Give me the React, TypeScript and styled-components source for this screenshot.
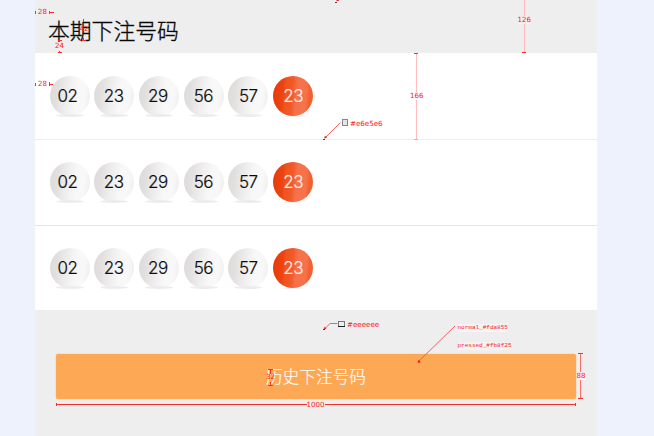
import React from "react";
import styled, { createGlobalStyle } from "styled-components";

const GlobalStyle = createGlobalStyle`
  *, *::before, *::after { box-sizing: border-box; }
  body {
    margin: 0;
    background: #edf2fc;
    font-family: "Liberation Sans", "Noto Sans CJK SC", sans-serif;
  }
`;

const Page = styled.div`
  position: relative;
  width: 654px;
  height: 436px;
  overflow: hidden;
  background: #edf2fc;
  padding: 0 57px 0 35px;
`;

const Screen = styled.main`
  height: 100%;
  display: flex;
  flex-direction: column;
  background: #eeeeee;
`;

const Header = styled.header`
  height: 53px;
  padding: 14px 0 0 13px;
`;

const Title = styled.h1`
  margin: 0;
  font: 300 21.8px/32px "Noto Sans CJK SC", sans-serif;
  color: #080808;
  -webkit-text-stroke: 0.35px #080808;
  white-space: nowrap;
`;

const Row = styled.section<{ $height: number; $top: number; $line: string }>`
  display: flex;
  align-items: flex-start;
  gap: 4.7px;
  height: ${(p) => p.$height}px;
  padding: ${(p) => p.$top}px 0 0 14.5px;
  background: #fff;
  border-bottom: 1px solid ${(p) => p.$line};
`;

const Ball = styled.span<{ $red?: boolean; $shift: number }>`
  position: relative;
  width: 40px;
  height: 40px;
  border-radius: 50%;
  text-align: center;
  text-indent: ${(p) => p.$shift}px;
  font: 300 17px/40px Inter, "Liberation Sans", sans-serif;
  letter-spacing: -0.5px;
  color: ${(p) => (p.$red ? "#fff0e8" : "#0c0c0c")};
  -webkit-text-stroke: 0.2px currentColor;
  background: ${(p) =>
    p.$red
      ? "linear-gradient(95deg, #e83706 0%, #ec4511 26%, #f0531f 32%, #f15a29 48%, #f5714a 58%, #f5734c 80%, #f2602f 88%, #f2602f 100%)"
      : "linear-gradient(97deg, #dcdada 0%, #e2e0df 20%, #f0efef 45%, #f9f8f8 65%, #f9f8f8 82%, #ececec 100%)"};

  &::after {
    content: "";
    position: absolute;
    left: 6px;
    top: 38px;
    width: 28px;
    height: 3px;
    border-radius: 50%;
    background: ${(p) =>
      p.$red ? "linear-gradient(transparent 60%, #f4f0f0 60%)" : "#ececec"};
  }
`;

const Footer = styled.footer`
  flex: 1;
  padding: 43.7px 21px 0;
`;

const HistoryButton = styled.button`
  display: block;
  width: 520px;
  height: 45px;
  padding: 0;
  border: 0;
  border-radius: 2px;
  background: #fda855;
  box-shadow: 0 0 0 0.5px #f9d5ad;
  color: #fff;
  font: 300 16.7px/43px "Noto Sans CJK SC", sans-serif;
  -webkit-text-stroke: 0.15px #fff;
`;

const Overlay = styled.div`
  position: absolute;
  inset: 0;
  pointer-events: none;
`;

const Lines = styled.svg`
  position: absolute;
  inset: 0;
  fill: none;
  shape-rendering: crispEdges;
`;

const Note = styled.span<{ $x: number; $y: number; $bg?: string; $mono?: boolean }>`
  position: absolute;
  left: ${(p) => p.$x}px;
  top: ${(p) => p.$y}px;
  height: 8px;
  white-space: nowrap;
  color: #f8201c;
  background: ${(p) => p.$bg ?? "transparent"};
  font: ${(p) =>
    p.$mono ? '6px/8px "Liberation Mono", monospace' : '7.1px/8px "DejaVu Sans", sans-serif'};
`;

const ROWS = [
  { height: 87, top: 23, line: "#efeeef" },
  { height: 86, top: 22, line: "#e6e5e6" },
  { height: 84, top: 21.5, line: "#fff" },
];

const BALLS = [
  { number: "02", shift: -4 },
  { number: "23", shift: -1 },
  { number: "29", shift: -2 },
  { number: "56", shift: -0.5 },
  { number: "57", shift: 0 },
  { number: "23", shift: 0.5, red: true },
];

const NOTES = [
  { x: 38, y: 8, text: "28" },
  { x: 79.5, y: 25, text: "42" },
  { x: 55, y: 42, text: "24" },
  { x: 38, y: 80, text: "28" },
  { x: 517.5, y: 16, text: "126", bg: "#f3f0f0" },
  { x: 410, y: 92, text: "166", bg: "#fff" },
  { x: 350, y: 120, text: "#e6e5e6" },
  { x: 347, y: 321, text: "#eeeeee" },
  { x: 457.5, y: 324, text: "normal_#fda855", bg: "#f7f4f4", mono: true },
  { x: 457.5, y: 342, text: "pressed_#fb8f25", bg: "#f5f2f2", mono: true },
  { x: 266, y: 373, text: "32" },
  { x: 306.5, y: 401, text: "1000", bg: "#eeeeee" },
  { x: 576.5, y: 372, text: "88", bg: "#f6f1f1" },
];

const Annotations = () => (
  <Overlay>
    <Lines width="654" height="436" viewBox="0 0 654 436">
      <path d="M524.5 0V52M416.5 54V139" stroke="#ffbcbc" />
      <g stroke="#f8302c">
        <path d="M522 52.5h4M414 53.5h4" />
        <path d="M56 404.5H576M56.5 403v3M575.5 403v3" />
        <path d="M578 353.5h5M578 398.5h5" />
        <path d="M82 40.5h4M83.5 19v3M83.5 38v3M58 40.5h4M59.5 40v2M58 52.5h4M59.5 51v2" />
        <path d="M268 369.5h5M268 385.5h5M270.5 370v4M270.5 382v3" />
        <path d="M35.5 11v3M49 12.5h5M49.5 11v3M35.5 83v3M49 84.5h4M49.5 82v4" />
      </g>
      <path d="M414 139.5h4" stroke="#f4a59f" />
      <path d="M580.5 354V398" stroke="#ff6b66" />
      <g shapeRendering="geometricPrecision">
        <path
          d="M340.5 122.5L325 138M337.5 323.5H330L324.5 329M455 326L419 361"
          stroke="#f8504c"
          strokeWidth="0.9"
        />
        <path
          d="M324 138.5l1-2.8 2 2zM323.5 329.5l1.2-2.8 1.8 1.8zM417.5 363l1-3.2 2.4 2.4zM336 1l2-2 1 2z"
          fill="#f01818"
        />
      </g>
      <path d="M323 139.5h2M323 329.5h2M335 2.5h2" stroke="#444" />
      <rect x="342.5" y="119.5" width="5" height="6" fill="#e6e5e6" stroke="#888" />
      <rect x="338.5" y="321.5" width="6" height="5" fill="#eeeeee" stroke="#777" />
      <path d="M338 326.5h7" stroke="#222" />
    </Lines>
    {NOTES.map((n) => (
      <Note key={`${n.x}-${n.y}`} $x={n.x} $y={n.y} $bg={n.bg} $mono={n.mono}>
        {n.text}
      </Note>
    ))}
  </Overlay>
);

export default function App() {
  return (
    <>
      <GlobalStyle />
      <Page>
        <Screen>
          <Header>
            <Title>本期下注号码</Title>
          </Header>
          {ROWS.map((row, i) => (
            <Row key={i} $height={row.height} $top={row.top} $line={row.line}>
              {BALLS.map((ball, j) => (
                <Ball key={j} $red={ball.red} $shift={ball.shift}>
                  {ball.number}
                </Ball>
              ))}
            </Row>
          ))}
          <Footer>
            <HistoryButton>历史下注号码</HistoryButton>
          </Footer>
        </Screen>
        <Annotations />
      </Page>
    </>
  );
}
